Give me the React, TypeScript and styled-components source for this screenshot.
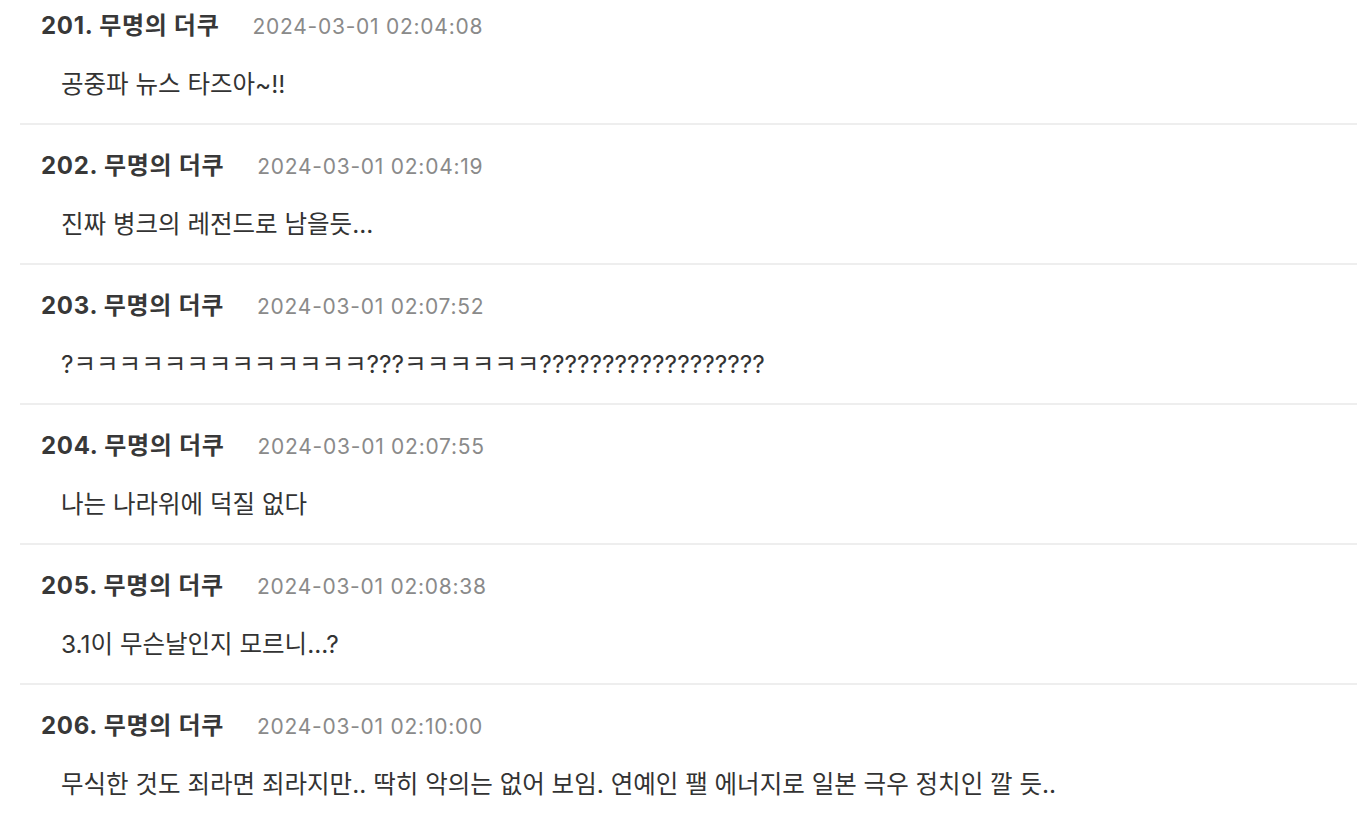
import React, { FC } from "react";
import styled, { createGlobalStyle } from "styled-components";

const GlobalStyle = createGlobalStyle`
    html, body {
        margin: 0;
        padding: 0;
        background: #fff;
    }
    body {
        font-family: Inter, "Noto Sans CJK KR", sans-serif;
        -webkit-font-smoothing: antialiased;
    }
`;

interface Comment {
    no: number;
    author: string;
    created: string;
    content: string;
}

const comments: Comment[] = [
    { no: 201, author: "무명의 더쿠", created: "2024-03-01 02:04:08", content: "공중파 뉴스 타즈아~!!" },
    { no: 202, author: "무명의 더쿠", created: "2024-03-01 02:04:19", content: "진짜 병크의 레전드로 남을듯..." },
    {
        no: 203,
        author: "무명의 더쿠",
        created: "2024-03-01 02:07:52",
        content: "?ㅋㅋㅋㅋㅋㅋㅋㅋㅋㅋㅋㅋㅋ???ㅋㅋㅋㅋㅋㅋ??????????????????"
    },
    { no: 204, author: "무명의 더쿠", created: "2024-03-01 02:07:55", content: "나는 나라위에 덕질 없다" },
    { no: 205, author: "무명의 더쿠", created: "2024-03-01 02:08:38", content: "3.1이 무슨날인지 모르니...?" },
    {
        no: 206,
        author: "무명의 더쿠",
        created: "2024-03-01 02:10:00",
        content: "무식한 것도 죄라면 죄라지만.. 딱히 악의는 없어 보임. 연예인 팰 에너지로 일본 극우 정치인 깔 듯.."
    }
];

const List = styled.ul`
    list-style: none;
    margin: 0;
    padding: 0 0 0 20px;
`;

const CommentEntry = styled.li`
    padding: 26px 0 24px 21px;
    border-bottom: 2px solid #eeeeee;

    &:first-child {
        padding-top: 11px;
    }
`;

const CommentHeader = styled.div`
    display: flex;
    align-items: baseline;
    height: 30px;
    line-height: 30px;
`;

const Author = styled.b`
    font-size: 24px;
    font-weight: bold;
    letter-spacing: 0.7px;
    color: #383838;
    margin-right: 33px;
`;

const Created = styled.span`
    font-size: 21px;
    letter-spacing: 0.75px;
    color: #8a8a8a;
`;

const Body = styled.div`
    margin-top: 28px;
    padding-left: 20px;
    font-size: 24.5px;
    line-height: 30px;
    color: #333;
`;

const CommentItem: FC<{ comment: Comment }> = ({ comment }) => (
    <CommentEntry>
        <CommentHeader>
            <Author>
                {comment.no}. {comment.author}
            </Author>
            <Created>{comment.created}</Created>
        </CommentHeader>
        <Body>{comment.content}</Body>
    </CommentEntry>
);

export default function App() {
    return (
        <>
            <GlobalStyle />
            <List>
                {comments.map(c => (
                    <CommentItem key={c.no} comment={c} />
                ))}
            </List>
        </>
    );
}
